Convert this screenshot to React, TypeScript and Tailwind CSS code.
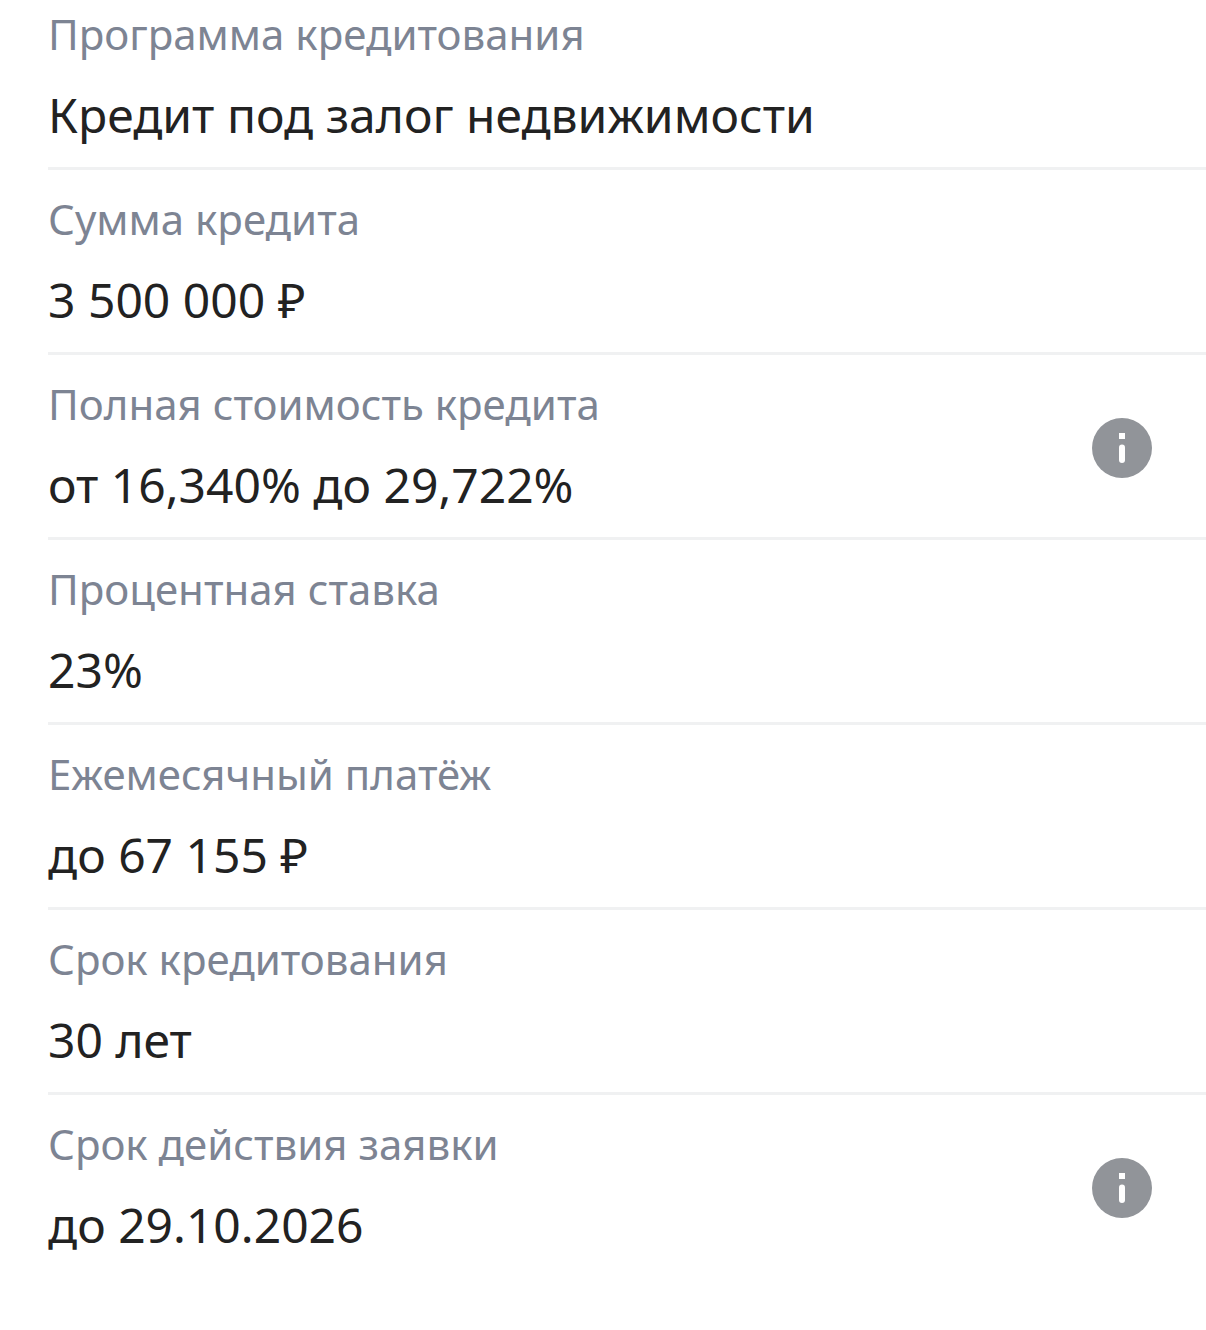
type Row = { label: string; value: string; info?: boolean };

const rows: Row[] = [
  { label: "Программа кредитования", value: "Кредит под залог недвижимости" },
  { label: "Сумма кредита", value: "3 500 000 ₽" },
  { label: "Полная стоимость кредита", value: "от 16,340% до 29,722%", info: true },
  { label: "Процентная ставка", value: "23%" },
  { label: "Ежемесячный платёж", value: "до 67 155 ₽" },
  { label: "Срок кредитования", value: "30 лет" },
  { label: "Срок действия заявки", value: "до 29.10.2026", info: true },
];

function InfoButton({ label }: { label: string }) {
  return (
    <button type="button" aria-label={`Подробнее: ${label}`} className="mt-1 size-[60px] shrink-0">
      <svg viewBox="0 0 60 60" className="size-full" aria-hidden="true">
        <circle cx="30" cy="30" r="30" fill="#919499" />
        <rect x="27" y="15" width="6" height="6" fill="#fff" />
        <rect x="27" y="26.5" width="6" height="18.5" rx="3" fill="#fff" />
      </svg>
    </button>
  );
}

export default function App() {
  return (
    <main className="min-h-screen bg-white pl-12 font-['Noto_Sans',sans-serif]">
      <dl>
        {rows.map((row) => (
          <div
            key={row.label}
            className="flex items-center justify-between border-b-3 border-[#f0f1f2] py-[19px] pr-[54px] first:pt-1 last:border-b-0"
          >
            <div>
              <dt className="text-[42px] leading-[60px] text-[#7d8493]">{row.label}</dt>
              <dd className="mt-[18px] text-[48px] leading-[66px] text-[#222222]">{row.value}</dd>
            </div>
            {row.info && <InfoButton label={row.label} />}
          </div>
        ))}
      </dl>
    </main>
  );
}
